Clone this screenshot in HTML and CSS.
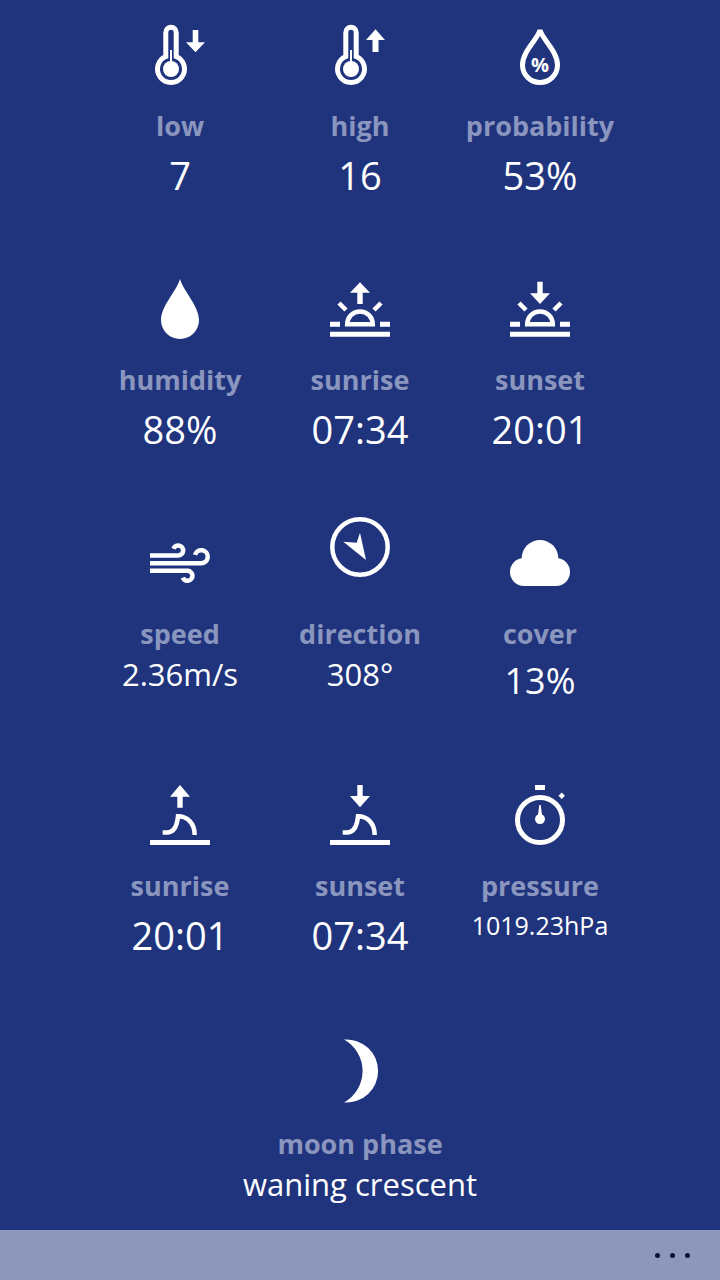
FILE: index.html
```html
<!DOCTYPE html>
<html lang="en">
<head>
    <meta charset="UTF-8">
    <meta name="viewport" content="width=device-width, initial-scale=1.0">
    <title>Weather details</title>
    <link rel="stylesheet" href="styles.css">
</head>
<body>

    <main class="stats">

        <div class="stat">
            <svg class="stat-icon" viewBox="0 0 60 60">
                <path class="line thick" d="M15.8 31.500V7.500a5.200 5.200 0 0 1 10.400 0V31.500a13.500 13.500 0 1 1-10.400 0z"/>
                <circle class="fill" cx="21" cy="44" r="8"/>
                <rect class="fill" x="20" y="25" width="2" height="14"/>
                <path class="fill" d="M42.700 5h5.600v12.300h6.700l-9.500 10-9.500-10h6.700z"/>
            </svg>
            <div class="stat-label">low</div>
            <div class="stat-value">7</div>
        </div>

        <div class="stat">
            <svg class="stat-icon" viewBox="0 0 60 60">
                <path class="line thick" d="M15.8 31.500V7.500a5.200 5.200 0 0 1 10.400 0V31.500a13.500 13.500 0 1 1-10.400 0z"/>
                <circle class="fill" cx="21" cy="44" r="8"/>
                <rect class="fill" x="20" y="25" width="2" height="14"/>
                <path class="fill" d="M45.500 4.300l9.500 10.700h-6.500v12h-6V15H36z"/>
            </svg>
            <div class="stat-label">high</div>
            <div class="stat-value">16</div>
        </div>

        <div class="stat">
            <svg class="stat-icon" viewBox="0 0 60 60">
                <path class="line thick" d="M30 5C28 14 12.500 26 12.500 40a17.500 17.500 0 0 0 35 0C47.500 26 32 14 30 5z"/>
                <text class="drop-text" x="30" y="46.500">%</text>
            </svg>
            <div class="stat-label">probability</div>
            <div class="stat-value">53%</div>
        </div>

        <div class="stat">
            <svg class="stat-icon" viewBox="0 0 60 60">
                <path class="fill" d="M30 0C26 13 11 27 11 41a19 19 0 0 0 38 0C49 27 34 13 30 0z"/>
            </svg>
            <div class="stat-label">humidity</div>
            <div class="stat-value">88%</div>
        </div>

        <div class="stat">
            <svg class="stat-icon" viewBox="0 0 60 60">
                <path class="fill" d="M30 3.300l10 10.400h-7.300V25h-5.400V13.700H20z"/>
                <path class="line" d="M9 24l7 7M51 24l-7 7M17.200 45.200a12.800 12.800 0 0 1 25.600 0z"/>
                <path class="fill" d="M0 42.700h10v5H0zM50 42.700h10v5H50zM0 52.700h60v5H0z"/>
            </svg>
            <div class="stat-label">sunrise</div>
            <div class="stat-value">07:34</div>
        </div>

        <div class="stat">
            <svg class="stat-icon" viewBox="0 0 60 60">
                <path class="fill" d="M27.300 2.700h5.400v11.600H40L30 25 20 14.300h7.300z"/>
                <path class="line" d="M9 24l7 7M51 24l-7 7M17.200 45.200a12.800 12.800 0 0 1 25.600 0z"/>
                <path class="fill" d="M0 42.700h10v5H0zM50 42.700h10v5H50zM0 52.700h60v5H0z"/>
            </svg>
            <div class="stat-label">sunset</div>
            <div class="stat-value">20:01</div>
        </div>

        <div class="stat">
            <svg class="stat-icon" viewBox="0 0 60 60">
                <path class="line" d="M0 22.500h28.300a5 5 0 1 0-4.800-6.800M0 30.200h51.200a6.500 6.500 0 1 0-6.200-8.300M0 37.800h37.800a5 5 0 1 1-5 6.800"/>
            </svg>
            <div class="stat-label">speed</div>
            <div class="stat-value stat-value-sm">2.36m/s</div>
        </div>

        <div class="stat">
            <svg class="stat-icon" viewBox="0 0 60 60">
                <circle class="line" cx="30" cy="14" r="27.700"/>
                <path class="fill" d="M13.300 8.700L26.700 9.700 30 -.3 36 27z"/>
            </svg>
            <div class="stat-label">direction</div>
            <div class="stat-value stat-value-sm">308°</div>
        </div>

        <div class="stat">
            <svg class="stat-icon" viewBox="0 0 60 60">
                <circle class="fill" cx="30" cy="25.300" r="18.300"/>
                <circle class="fill" cx="14" cy="39" r="14"/>
                <circle class="fill" cx="46" cy="39" r="14"/>
                <rect class="fill" x="14" y="35" width="32" height="18"/>
            </svg>
            <div class="stat-label">cover</div>
            <div class="stat-value stat-value-md">13%</div>
        </div>

        <div class="stat">
            <svg class="stat-icon" viewBox="0 0 60 60">
                <path class="fill" d="M30 0l10 11.700h-7.300v11h-5.400v-11H20z"/>
                <path class="line" d="M12.700 47.500H17C24 47.500 27 42 28 31.300 37 31.300 44.700 38 44.700 50"/>
                <rect class="fill" y="55" width="60" height="5"/>
            </svg>
            <div class="stat-label">sunrise</div>
            <div class="stat-value">20:01</div>
        </div>

        <div class="stat">
            <svg class="stat-icon" viewBox="0 0 60 60">
                <path class="fill" d="M27.300 0h5.400v11H40L30 22.300 20 11h7.300z"/>
                <path class="line" d="M12.700 47.500H17C24 47.500 27 42 28 31.300 37 31.300 44.700 38 44.700 50"/>
                <rect class="fill" y="55" width="60" height="5"/>
            </svg>
            <div class="stat-label">sunset</div>
            <div class="stat-value">07:34</div>
        </div>

        <div class="stat">
            <svg class="stat-icon" viewBox="0 0 60 60">
                <path class="fill" d="M25 0h10v5H25zM51.700 7.500l3.200 3.200-3.200 3.200-3.200-3.200z"/>
                <circle class="line thick" cx="30" cy="35" r="22.500"/>
                <path class="fill" d="M29.300 20h1.400l1.300 9.500a5 5 0 1 1-4 0z"/>
            </svg>
            <div class="stat-label">pressure</div>
            <div class="stat-value stat-value-xs">1019.23hPa</div>
        </div>

        <div class="stat stat-wide">
            <svg class="stat-icon" viewBox="0 0 60 60">
                <path class="fill" d="M14-1.500A31.600 31.600 0 1 1 14 61.500 36 36 0 0 0 14-1.500z"/>
            </svg>
            <div class="stat-label">moon phase</div>
            <div class="stat-value stat-value-sm">waning crescent</div>
        </div>

    </main>

    <footer class="app-bar">
        <div class="more">
            <span></span>
            <span></span>
            <span></span>
        </div>
    </footer>

</body>
</html>
```

FILE: styles.css
```css
* {
    box-sizing: border-box;
}

body {
    margin: 0;
    width: 720px;
    height: 1280px;
    display: flex;
    flex-direction: column;
    background-color: #20347e;
    font-family: "Open Sans", "Noto Sans", sans-serif;
    color: #fff;
    overflow: hidden;
}

.stats {
    flex: 1;
    min-height: 0;
    display: grid;
    grid-template-columns: repeat(3, 180px);
    grid-template-rows: 254px 254px 252px 256px auto;
    justify-content: center;
    padding-top: 25px;
}

.stat {
    display: flex;
    flex-direction: column;
    align-items: center;
    white-space: nowrap;
}

.stat-wide {
    grid-column: 1 / -1;
}

.stat-wide .stat-icon {
    margin-bottom: 2px;
}

.stat-icon {
    width: 60px;
    height: 60px;
    flex: none;
    overflow: visible; /* compass and moon poke out of the box */
}

.fill {
    fill: #fff;
}

.line {
    fill: none;
    stroke: #fff;
    stroke-width: 4.5;
}

.line.thick {
    stroke-width: 5;
}

.drop-text {
    fill: #fff;
    font-size: 20px;
    font-weight: 700;
    text-anchor: middle;
}

.stat-label {
    margin-top: 21px;
    font-size: 27px;
    line-height: 40px;
    font-weight: 700;
    color: #8b96bf;
}

.stat-value {
    font-size: 38px;
    line-height: 50px;
    margin-top: 4px;
}

.stat-value-md {
    font-size: 36px;
    margin-top: 2px;
}

.stat-value-sm {
    font-size: 31px;
    line-height: 40px;
    margin-top: 0;
}

.stat-value-xs {
    font-size: 25px;
    line-height: 36px;
    margin-top: 1px;
}

/* bottom bar */
.app-bar {
    height: 50px;
    flex: none;
    display: flex;
    justify-content: flex-end;
    align-items: center;
    padding-right: 30px;
    background-color: #8d97bc;
}

.more {
    display: flex;
    gap: 10px;
}

.more span {
    width: 5px;
    height: 5px;
    border-radius: 50%;
    background-color: #0b1234;
}
```
